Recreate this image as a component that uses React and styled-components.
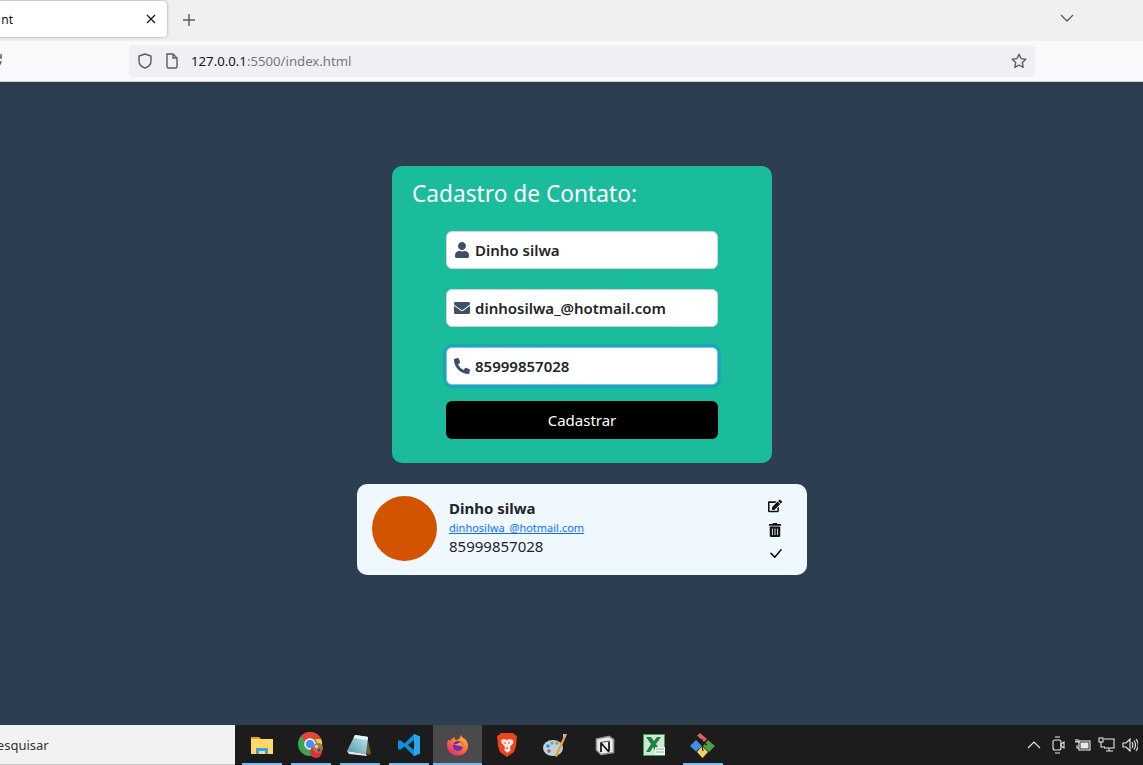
import React from 'react';
import styled, { createGlobalStyle } from 'styled-components';
import { FaUser, FaEnvelope, FaPhoneAlt, FaEdit, FaTrashAlt } from 'react-icons/fa';
import { BsCheckLg } from 'react-icons/bs';

const GlobalStyle = createGlobalStyle`
  html, body {
    margin: 0;
    padding: 0;
    overflow: hidden;
    font-family: "Noto Sans", "Open Sans", sans-serif;
  }
  * {
    box-sizing: border-box;
  }
`

const Screen = styled.div`
  display: flex;
  flex-direction: column;
  width: 1143px;
  height: 765px;
  overflow: hidden;
`

/* browser chrome */
const TabStrip = styled.div`
  display: flex;
  align-items: flex-start;
  flex: 0 0 41px;
  padding-top: 1px;
  padding-right: 69px;
  background: #f0f0f0;
`
const Tab = styled.div`
  display: flex;
  align-items: center;
  justify-content: space-between;
  width: 187px;
  height: 36px;
  margin-left: -20px;
  padding: 0 11px 0 18px;
  background: #fff;
  border-radius: 4px;
  box-shadow: 0 0 3px rgba(0, 0, 0, 0.4);
  font-size: 12px;
  color: #15141a;
`
const TabTitle = styled.span`
  width: 15px;
  overflow: hidden;
  direction: rtl;
`
const StripIcon = styled.button`
  display: flex;
  padding: 0;
  border: 0;
  background: none;
  margin-top: ${props => props.top}px;
  margin-left: ${props => props.left || 0}px;
`
const Spacer = styled.div`
  flex: 1;
`
const Toolbar = styled.div`
  display: flex;
  align-items: center;
  flex: 0 0 41px;
  padding: 0 108px 1px 0;
  background: #f9f9fb;
  border-bottom: 1px solid #ccd0d3;
`
const ReloadStub = styled.span`
  display: flex;
  margin: 0 126px 0 -13px;
`
const UrlBar = styled.div`
  flex: 1;
  display: flex;
  align-items: center;
  height: 32px;
  padding: 0 8px;
  background: #f0f0f4;
  border-radius: 4px;
  font-size: 13.2px;
  color: #77777f;
`
const UrlIcon = styled.span`
  display: flex;
  margin-right: ${props => props.gap}px;
`
const UrlHost = styled.span`
  color: #15141a;
`

/* page */
const Page = styled.main`
  flex: 1;
  display: flex;
  flex-direction: column;
  align-items: center;
  gap: 21px;
  padding: 84px 0 0 21px;
  background: #2c3e50;
`
const FormCard = styled.form`
  display: flex;
  flex-direction: column;
  width: 380px;
  height: 297px;
  padding: 10px 20px 0;
  background: #1abc9c;
  border-radius: 10px;
`
const Title = styled.h2`
  margin: 0 0 19px;
  font-size: 22.7px;
  font-weight: 400;
  line-height: 36px;
  color: #fff;
`
const Fields = styled.div`
  display: flex;
  flex-direction: column;
  width: 272px;
  margin: 0 auto;
`
const Field = styled.label`
  display: flex;
  align-items: center;
  gap: 5px;
  height: 38px;
  margin-bottom: ${props => props.mb}px;
  padding: 0 7px;
  background: #fff;
  border: 1px solid ${props => props.focused ? '#86b7fe' : '#ced4da'};
  border-radius: 6px;
  box-shadow: ${props => props.focused ? '0 0 0 3px rgba(13, 110, 253, 0.25)' : 'none'};
  color: #3f4f66;
`
const IconSlot = styled.span`
  display: flex;
  justify-content: center;
  flex: 0 0 16px;
  font-size: 16px;
`
const FieldInput = styled.input`
  flex: 1;
  min-width: 0;
  padding: 0;
  border: 0;
  outline: 0;
  background: none;
  font-family: inherit;
  font-size: 15px;
  font-weight: 600;
  color: #212529;
`
const SubmitButton = styled.button`
  height: 38px;
  border: 0;
  border-radius: 6px;
  background: #000;
  color: #fff;
  font-family: inherit;
  font-size: 15px;
`
const ContactCard = styled.section`
  display: flex;
  align-items: center;
  width: 450px;
  height: 91px;
  padding: 0 15px;
  background: #f0f8ff;
  border-radius: 10px;
`
const Avatar = styled.div`
  flex: 0 0 65px;
  height: 65px;
  margin: 0 12px 2px 0;
  background: #d35400;
  border-radius: 50%;
`
const ContactInfo = styled.div`
  flex: 1;
  display: flex;
  flex-direction: column;
  padding-bottom: 5px;
  color: #212529;
`
const ContactName = styled.strong`
  font-size: 15px;
  line-height: 20px;
`
const ContactEmail = styled.a`
  font-size: 11px;
  line-height: 16px;
  margin-top: 2px;
  color: #0d6efd;
  text-decoration: underline;
`
const ContactPhone = styled.span`
  font-size: 15px;
  line-height: 21px;
`
const Actions = styled.div`
  display: flex;
  flex-direction: column;
  align-items: center;
  gap: 10px;
  width: 16px;
  margin-right: 9px;
  font-size: 14px;
  color: #111;
`
const ActionIcon = styled.span`
  display: flex;
  height: 14px;
  align-items: center;
`

/* windows taskbar */
const Taskbar = styled.footer`
  display: flex;
  align-items: stretch;
  flex: 0 0 40px;
  background: #1c1c1c;
`
const Search = styled.div`
  display: flex;
  align-items: center;
  flex: 0 0 235px;
  margin-right: 2px;
  background: #f2f2f2;
  border-bottom: 1px solid #c8c8c8;
  font-size: 13px;
  color: #333;
`
const SearchText = styled.span`
  margin-left: -11px;
`
const Apps = styled.div`
  display: flex;
`
const AppCell = styled.div`
  position: relative;
  display: flex;
  align-items: center;
  justify-content: center;
  width: 49px;
  background: ${props => props.active ? '#4a4a4a' : 'transparent'};

  &::after {
    content: '';
    position: absolute;
    left: ${props => props.active ? '0' : '5px'};
    right: ${props => props.active ? '0' : '4px'};
    bottom: 0;
    height: 2px;
    background: ${props => props.running ? '#76b9ed' : 'transparent'};
  }
`
const Tray = styled.div`
  display: flex;
  align-items: center;
  margin-left: auto;
  padding-right: 1px;
`
const TrayItem = styled.span`
  display: flex;
  justify-content: center;
  width: 24px;
`

const stroke = { fill: 'none', stroke: '#5b5b66', strokeWidth: 1.4 };
const tray = { fill: 'none', stroke: '#e8e8e8', strokeWidth: 1.1 };

const Shield = () => (
  <svg width="16" height="16" viewBox="0 0 16 16" {...stroke}>
    <path d="M8 1 2 3v5c0 3.500 3 6 6 7 3-1 6-3.500 6-7V3z" />
  </svg>
)
const PageIcon = () => (
  <svg width="14" height="16" viewBox="0 0 14 16" {...stroke}>
    <path d="M2 1h6l4 4v8.500a1.500 1.500 0 0 1-1.500 1.500h-7A1.500 1.500 0 0 1 2 13.500z" />
    <path d="M8 1v4h4" />
  </svg>
)
const Star = () => (
  <svg width="16" height="16" viewBox="0 0 16 16" {...stroke}>
    <path d="m8 1.200 2.100 4.400 4.700.6-3.500 3.300.9 4.800L8 12l-4.200 2.300.9-4.800L1.200 6.200l4.700-.6z" strokeLinejoin="round" />
  </svg>
)

const FolderIcon = () => (
  <svg width="22" height="20" viewBox="0 0 22 20">
    <path d="M0 2h8l2 2H0z" fill="#e0a526" />
    <rect y="4" width="22" height="15" fill="#ffd868" />
    <path d="M5 19v-6h12v6h-3v-3H8v3z" fill="#3d9fe0" />
  </svg>
)
const ChromeIcon = () => (
  <svg width="29" height="27" viewBox="-2 0 29 27">
    <circle cx="12" cy="12" r="12" fill="#3aa655" />
    <path d="M12 0a12 12 0 0 1 11 7H12a5 5 0 0 0-5 3L3 4a12 12 0 0 1 9-4z" fill="#e0463a" />
    <path d="M23 7a12 12 0 0 1-9 17l4-9a6 6 0 0 0-1-8z" fill="#f5c93e" />
    <circle cx="12" cy="12" r="5" fill="#4a8ff0" stroke="#fff" strokeWidth="1.500" />
    <circle cx="18" cy="20" r="6" fill="#d9323c" />
    <circle cx="20" cy="16" r="5" fill="#a8705c" />
    <circle cx="18.500" cy="14.500" r="1.800" fill="#e0c8b8" />
    <circle cx="21" cy="18" r="1.500" fill="#6e3f30" />
  </svg>
)
const NotepadIcon = () => (
  <svg width="25" height="23" viewBox="0 0 25 23">
    <defs>
      <linearGradient id="pad" x1="0" y1="1" x2="1" y2="0">
        <stop offset="0" stopColor="#4f97a8" />
        <stop offset="1" stopColor="#c7ecf2" />
      </linearGradient>
    </defs>
    <path d="M8 1 20 2.500 24 19l-2 2-2-1z" fill="#6b5a3a" />
    <path d="M8 1 21 3l-2 17L0 17z" fill="url(#pad)" />
    <path d="M8 1 21 3l-.5 3L6.500 4z" fill="#e4f6f8" />
    <path d="m0 17 19 3 1 2-18-2z" fill="#e8e8e8" />
  </svg>
)
const VsCodeIcon = () => (
  <svg width="24" height="24" viewBox="0 0 24 24">
    <path d="M17 1 7.500 10.500 3 7 1 8v8l2 1 4.500-3.500L17 23l6-2.500v-17z" fill="#0e8fdc" />
    <path d="M17 7v10l-6-5z" fill="#1c1c1c" />
    <path d="M17 1l6 2.500v17L17 23z" fill="#28a8ea" />
  </svg>
)
const FirefoxIcon = () => (
  <svg width="24" height="24" viewBox="0 0 24 24">
    <defs>
      <linearGradient id="fx" x1="0.8" y1="0" x2="0.2" y2="1">
        <stop offset="0" stopColor="#ffc52e" />
        <stop offset="0.5" stopColor="#ff7139" />
        <stop offset="1" stopColor="#e3227a" />
      </linearGradient>
    </defs>
    <path d="M15 1c0 3 2 4 4 5 3 3 4 7 2 11-2 4-6 6-10 5.500C5 22 1 17.500 1 12c0-2 .5-4 1.500-5.500L4 8c1-2 3-3 5-4-1 2 0 3 1 3 3 0 5-3 5-6z" fill="url(#fx)" />
    <circle cx="12" cy="13" r="5" fill="#6c2bb8" />
    <path d="M6 11c3 1 6 0 8-2 2 1 3 3 3 5-3-2-7-1-11-3z" fill="#ff9a2e" />
  </svg>
)
const BraveIcon = () => (
  <svg width="20" height="24" viewBox="0 0 20 24">
    <path d="M4 0h12l2 2 2 1-1 10-2 6-7 5-7-5-2-6L0 3l2-1z" fill="#f0441f" />
    <path d="M4 7l3-1 3 1 3-1 3 1 .5 3-3 3-.5 3 1 1-3.500 3-3.500-3 1-1-.5-3-3-3z" fill="#fbe9e4" />
    <path d="M7 10h2M11 10h2M10 14v2" stroke="#f0441f" strokeWidth="1.200" />
  </svg>
)
const PaintIcon = () => (
  <svg width="25" height="25" viewBox="0 0 25 25">
    <ellipse cx="10" cy="15" rx="10" ry="8" fill="#b5d5e4" />
    <circle cx="5" cy="13" r="1.800" fill="#3f86d8" />
    <circle cx="9" cy="10" r="1.800" fill="#7fb04a" />
    <circle cx="14" cy="10" r="1.800" fill="#e2804a" />
    <circle cx="6" cy="18" r="1.800" fill="#d8504a" />
    <path d="M20 5 22 6 14 24 11.500 23z" fill="#e8a33a" />
    <path d="M20 1h4l-2 5-2-1z" fill="#d9b07a" />
  </svg>
)
const NotionIcon = () => (
  <svg width="20" height="21" viewBox="0 0 20 21">
    <path d="M1.500 4 14 1.500l4.500 3v13L6 19.500 1.500 15z" fill="#ececec" stroke="#9a9a9a" strokeWidth="1.600" strokeLinejoin="round" />
    <path d="M5 7.500 15 6" stroke="#555" strokeWidth="1" fill="none" />
    <path d="M6 8v9M6 8l8 9M14 7v9" stroke="#111" strokeWidth="1.700" fill="none" />
  </svg>
)
const ExcelIcon = () => (
  <svg width="22" height="22" viewBox="0 0 22 22">
    <rect width="22" height="22" fill="#3f9a5c" />
    <rect x="1" y="1" width="20" height="20" fill="#cfe8d2" />
    <path d="M3 3h5l3 4 3-4h4l-5 7 5 8h-5l-3-5-3 5H3l5-8z" fill="#1e7f45" />
    <path d="M12 13h10v8H12z" fill="#f2f7f2" />
    <path d="M13 15h8M13 18h8" stroke="#7fb48c" strokeWidth="1" />
  </svg>
)
const GitIcon = () => (
  <svg width="25" height="25" viewBox="0 0 25 25">
    <path d="M6 7l6 6-6 5.500L0 13z" fill="#3f8fe8" />
    <path d="M12 13l6 6-5.500 6L7 19z" fill="#f2cf5b" />
    <path d="M18 7l7 6-6 6-6-6z" fill="#4f9e4a" />
    <path d="M7 2.500 10 0l7 6-3 3z" fill="#e2605a" />
    <path d="M12 6v7l1 5M12 9l5 3" stroke="#1c1c1c" strokeWidth="1.200" fill="none" />
  </svg>
)

const apps = [
  { id: 'files', Icon: FolderIcon, running: true },
  { id: 'chrome', Icon: ChromeIcon, running: true },
  { id: 'notepad', Icon: NotepadIcon, running: true },
  { id: 'vscode', Icon: VsCodeIcon, running: true },
  { id: 'firefox', Icon: FirefoxIcon, running: true, active: true },
  { id: 'brave', Icon: BraveIcon },
  { id: 'paint', Icon: PaintIcon },
  { id: 'notion', Icon: NotionIcon },
  { id: 'excel', Icon: ExcelIcon },
  { id: 'git', Icon: GitIcon, running: true },
]

export default function App () {
  return (
    <Screen>
      <GlobalStyle />
      <TabStrip>
        <Tab>
          <TabTitle>nt</TabTitle>
          <svg width="10" height="10" viewBox="0 0 10 10" stroke="#15141a" strokeWidth="1.200">
            <path d="M1 1l8 8M9 1 1 9" />
          </svg>
        </Tab>
        <StripIcon top={12} left={15}>
          <svg width="14" height="14" viewBox="0 0 14 14" stroke="#5b5b66" strokeWidth="1.400">
            <path d="M7 1v12M1 7h12" />
          </svg>
        </StripIcon>
        <Spacer />
        <StripIcon top={12}>
          <svg width="14" height="10" viewBox="0 0 14 10" fill="none" stroke="#5b5b66" strokeWidth="1.300">
            <path d="m1 2 6 6 6-6" />
          </svg>
        </StripIcon>
      </TabStrip>
      <Toolbar>
        <ReloadStub>
          <svg width="16" height="16" viewBox="0 0 16 16" {...stroke}>
            <path d="M14 8a6 6 0 1 1-2-4.500L14 5V1" />
          </svg>
        </ReloadStub>
        <UrlBar>
          <UrlIcon gap={12}><Shield /></UrlIcon>
          <UrlIcon gap={12}><PageIcon /></UrlIcon>
          <span><UrlHost>127.0.0.1</UrlHost>:5500/index.html</span>
          <Spacer />
          <Star />
        </UrlBar>
      </Toolbar>
      <Page>
        <FormCard onSubmit={e => e.preventDefault()}>
          <Title>Cadastro de Contato:</Title>
          <Fields>
            <Field mb={20}>
              <IconSlot><FaUser /></IconSlot>
              <FieldInput defaultValue="Dinho silwa" />
            </Field>
            <Field mb={20}>
              <IconSlot><FaEnvelope /></IconSlot>
              <FieldInput defaultValue="dinhosilwa_@hotmail.com" />
            </Field>
            <Field mb={16} focused>
              <IconSlot><FaPhoneAlt /></IconSlot>
              <FieldInput defaultValue="85999857028" />
            </Field>
            <SubmitButton>Cadastrar</SubmitButton>
          </Fields>
        </FormCard>
        <ContactCard>
          <Avatar />
          <ContactInfo>
            <ContactName>Dinho silwa</ContactName>
            <ContactEmail href="#">dinhosilwa_@hotmail.com</ContactEmail>
            <ContactPhone>85999857028</ContactPhone>
          </ContactInfo>
          <Actions>
            <ActionIcon><FaEdit /></ActionIcon>
            <ActionIcon><FaTrashAlt /></ActionIcon>
            <ActionIcon><BsCheckLg size={17} /></ActionIcon>
          </Actions>
        </ContactCard>
      </Page>
      <Taskbar>
        <Search><SearchText>Pesquisar</SearchText></Search>
        <Apps>
          {apps.map(({ id, Icon, running, active }) => (
            <AppCell key={id} running={running} active={active}><Icon /></AppCell>
          ))}
        </Apps>
        <Tray>
          <TrayItem>
            <svg width="14" height="10" viewBox="0 0 14 10" {...tray}><path d="m1 8 6-6 6 6" /></svg>
          </TrayItem>
          <TrayItem>
            <svg width="13" height="18" viewBox="0 0 13 18" {...tray}>
              <rect x="1" y="4" width="8" height="10" rx="2" />
              <path d="m9 8 3-2v6l-3-2zM3 1h5M3 17h5" />
            </svg>
          </TrayItem>
          <TrayItem>
            <svg width="17" height="14" viewBox="0 0 17 14" {...tray}>
              <rect x="5" y="3" width="11" height="9" />
              <rect x="7" y="5" width="7" height="5" fill="#e8e8e8" />
              <path d="M1 4h5M2 1v3M4 1v3M3 7v3h2" />
            </svg>
          </TrayItem>
          <TrayItem>
            <svg width="17" height="16" viewBox="0 0 17 16" {...tray}>
              <rect x="1" y="1" width="4" height="4" />
              <path d="M3 5v5h4M6 2h10v9H6M11 11v3M8 14h7" />
            </svg>
          </TrayItem>
          <TrayItem>
            <svg width="16" height="14" viewBox="0 0 16 14" {...tray}>
              <path d="M1 5h3l4-4v12L4 9H1zM10 4c1 2 1 4 0 6M12 2.500c2 3 2 6 0 9M14 1c3 4 3 8 0 12" />
            </svg>
          </TrayItem>
        </Tray>
      </Taskbar>
    </Screen>
  );
}
